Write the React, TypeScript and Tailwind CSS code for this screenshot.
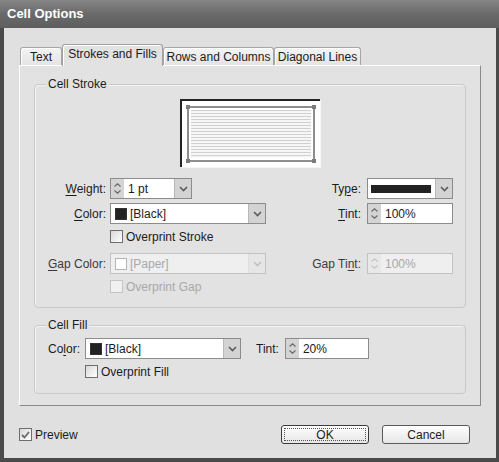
import React from 'react';

type Disabled = { disabled?: boolean };

function Chevron({ disabled }: Disabled) {
  return (
    <svg width="9" height="6" viewBox="0 0 9 6">
      <polyline points="1,1 4.5,4.5 8,1" fill="none" stroke={disabled ? '#c0c0c0' : '#5c5c5c'} strokeWidth="1.6" />
    </svg>
  );
}

function DropButton({ disabled }: Disabled) {
  return (
    <div
      className={`flex h-full w-[17px] shrink-0 items-center justify-center border-l ${
        disabled ? 'border-[#dedede] bg-[#e6e6e6]' : 'border-[#b8b8b8] bg-[#d3d3d3]'
      }`}
    >
      <Chevron disabled={disabled} />
    </div>
  );
}

// little up/down nudge arrows on the left of numeric fields
function Spinner({ disabled }: Disabled) {
  const c = disabled ? '#c4c4c4' : '#6a6a6a';
  return (
    <div
      className={`flex h-full w-[13px] shrink-0 flex-col items-center justify-center gap-[3px] ${
        disabled ? 'bg-[#e8e8e8]' : 'bg-[#d4d4d4]'
      }`}
    >
      <svg width="7" height="4" viewBox="0 0 7 4">
        <polyline points="0.5,3.5 3.5,0.8 6.5,3.5" fill="none" stroke={c} strokeWidth="1.2" />
      </svg>
      <svg width="7" height="4" viewBox="0 0 7 4">
        <polyline points="0.5,0.5 3.5,3.2 6.5,0.5" fill="none" stroke={c} strokeWidth="1.2" />
      </svg>
    </div>
  );
}

function Field({ width, disabled, children }: { width: string; disabled?: boolean; children: React.ReactNode }) {
  return (
    <div
      className={`flex h-[21px] shrink-0 items-stretch border ${width} ${
        disabled ? 'border-[#c2c2c2] bg-[#efefef] text-[#a8a8a8]' : 'border-[#8c8c8c] bg-white text-[#1c1c1c]'
      }`}
    >
      {children}
    </div>
  );
}

function SwatchSelect({ width, label, swatch, disabled }: { width: string; label: string; swatch: string; disabled?: boolean }) {
  return (
    <Field width={width} disabled={disabled}>
      <div className="flex flex-1 items-center gap-[3px] pl-[4px]">
        <span className={`h-[12px] w-[12px] border ${disabled ? 'border-[#b4b4b4]' : 'border-[#333]'} ${swatch}`} />
        <span>{label}</span>
      </div>
      <DropButton disabled={disabled} />
    </Field>
  );
}

function NumberField({ width, value, disabled }: { width: string; value: string; disabled?: boolean }) {
  return (
    <Field width={width} disabled={disabled}>
      <Spinner disabled={disabled} />
      <div className="flex flex-1 items-center pl-[4px]">{value}</div>
    </Field>
  );
}

function Check({ label, checked, disabled }: { label: string; checked?: boolean; disabled?: boolean }) {
  return (
    <div className={`flex h-[17px] items-center gap-[3px] ${disabled ? 'text-[#a8a8a8]' : 'text-[#1c1c1c]'}`}>
      <span
        className={`flex h-[13px] w-[13px] items-center justify-center border ${
          disabled ? 'border-[#c4c4c4] bg-[#f0f0f0]' : 'border-[#6e6e6e] bg-gradient-to-br from-[#d8d8d8] to-white'
        }`}
      >
        {checked && (
          <svg width="9" height="8" viewBox="0 0 9 8">
            <polyline points="1,4 3.5,6.5 8,1" fill="none" stroke="#6a6a6a" strokeWidth="1.8" />
          </svg>
        )}
      </span>
      <span>{label}</span>
    </div>
  );
}

const Key = ({ children }: { children: React.ReactNode }) => (
  <span className="underline decoration-1 underline-offset-[2px]">{children}</span>
);

function Group({ title, children, className }: { title: string; children: React.ReactNode; className?: string }) {
  return (
    <div className={`flex flex-col rounded-[4px] border border-[#c9c9c9] shadow-[inset_1px_1px_0_#f4f4f4] ${className ?? ''}`}>
      <span className="-mt-[8px] ml-[11px] w-fit bg-[#e2e2e2] px-[2px] leading-[14px] text-[#1c1c1c]">{title}</span>
      {children}
    </div>
  );
}

function Tab({ label, active, width }: { label: string; active?: boolean; width: string }) {
  return (
    <div
      className={`flex items-center justify-center rounded-t-[3px] border border-b-0 ${width} ${
        active
          ? 'z-10 -mb-[1px] h-[22px] border-[#a0a0a0] bg-[#e2e2e2] pb-[3px] shadow-[inset_1px_1px_0_#fff]'
          : 'h-[18px] border-[#a6a6a6] bg-gradient-to-b from-[#f4f4f4] to-[#e4e4e4] shadow-[inset_1px_1px_0_#fff]'
      }`}
    >
      {label}
    </div>
  );
}

// stroke preview: cell outline with handles and striped fill
function StrokePreview() {
  return (
    <div className="mx-auto mt-[8px] h-[68px] w-[140px] border-l-2 border-t-2 border-l-[#222] border-t-[#222] bg-white p-[5px] shadow-[1px_1px_0_#f6f6f6]">
      <div className="relative h-full w-full border-2 border-[#8e8e8e] p-[2px]">
        <div className="h-full w-full bg-[repeating-linear-gradient(to_bottom,#d0d0d0_0px,#d0d0d0_1px,#f6f6f6_1px,#f6f6f6_3px)]" />
        <span className="absolute -left-[3px] -top-[3px] h-[4px] w-[4px] bg-[#7c7c7c]" />
        <span className="absolute -right-[3px] -top-[3px] h-[4px] w-[4px] bg-[#7c7c7c]" />
        <span className="absolute -bottom-[3px] -left-[3px] h-[4px] w-[4px] bg-[#7c7c7c]" />
        <span className="absolute -bottom-[3px] -right-[3px] h-[4px] w-[4px] bg-[#7c7c7c]" />
      </div>
    </div>
  );
}

function Row({ label, control, rightLabel, rightControl, dim }: {
  label: React.ReactNode;
  control: React.ReactNode;
  rightLabel: React.ReactNode;
  rightControl: React.ReactNode;
  dim?: boolean;
}) {
  return (
    <div className={`flex h-[21px] items-center ${dim ? 'text-[#3a3a3a]' : ''}`}>
      <div className="w-[71px] shrink-0 text-right">{label}</div>
      <div className="ml-[4px] flex flex-1">{control}</div>
      <div className="shrink-0 text-right">{rightLabel}</div>
      <div className="ml-[6px] mr-[12px]">{rightControl}</div>
    </div>
  );
}

export default function App() {
  return (
    <div className="flex h-[462px] w-[499px] flex-col bg-[#4a4a4a] font-['Liberation_Sans',Arial,sans-serif] text-[12px] text-[#1c1c1c]">
      <div className="flex h-[28px] shrink-0 items-center bg-gradient-to-b from-[#858585] via-[#6a6a6a] to-[#5e5e5e] pl-[7px] text-[13px] font-bold text-white">
        Cell Options
      </div>

      <div className="ml-[4px] mr-[3px] mb-[4px] flex flex-1 flex-col bg-[#e0e0e0] px-[15px] pt-[16px]">
        <div className="flex items-end pl-[1px]">
          <Tab label="Text" width="w-[42px]" />
          <Tab label="Strokes and Fills" width="w-[101px]" active />
          <Tab label="Rows and Columns" width="w-[111px]" />
          <Tab label="Diagonal Lines" width="w-[87px]" />
        </div>

        <div className="flex h-[341px] flex-col border border-l-white border-t-white border-b-[#8a8a8a] border-r-[#8a8a8a] bg-[#e2e2e2] px-[14px] pt-[18px]">
          <Group title="Cell Stroke" className="h-[224px]">
            <StrokePreview />
            <div className="mt-[11px] flex flex-col">
              <Row
                label={<><Key>W</Key>eight:</>}
                control={
                  <Field width="w-[82px]">
                    <Spinner />
                    <div className="flex flex-1 items-center pl-[4px]">1 pt</div>
                    <DropButton />
                  </Field>
                }
                rightLabel={<>Ty<Key>p</Key>e:</>}
                rightControl={
                  <Field width="w-[86px]">
                    <div className="flex flex-1 items-center pl-[3px]">
                      <span className="h-[8px] w-[60px] bg-[#222]" />
                    </div>
                    <DropButton />
                  </Field>
                }
              />
              <div className="mt-[4px]">
                <Row
                  label={<><Key>C</Key>olor:</>}
                  control={<SwatchSelect width="w-[156px]" label="[Black]" swatch="bg-[#222]" />}
                  rightLabel={<><Key>T</Key>int:</>}
                  rightControl={<NumberField width="w-[86px]" value="100%" />}
                />
              </div>
              <div className="ml-[75px] mt-[4px]">
                <Check label="Overprint Stroke" />
              </div>
              <div className="mt-[8px]">
                <Row
                  dim
                  label={<><Key>G</Key>ap Color:</>}
                  control={<SwatchSelect width="w-[156px]" label="[Paper]" swatch="bg-white" disabled />}
                  rightLabel={<>Gap Ti<Key>n</Key>t:</>}
                  rightControl={<NumberField width="w-[86px]" value="100%" disabled />}
                />
              </div>
              <div className="ml-[75px] mt-[4px]">
                <Check label="Overprint Gap" disabled />
              </div>
            </div>
          </Group>

          <Group title="Cell Fill" className="mt-[17px] h-[69px]">
            <div className="mt-[6px] flex h-[21px] items-center">
              <div className="w-[45px] shrink-0 text-right">
                Co<Key>l</Key>or:
              </div>
              <div className="ml-[5px]">
                <SwatchSelect width="w-[156px]" label="[Black]" swatch="bg-[#222]" />
              </div>
              <div className="ml-[15px]">Tint:</div>
              <div className="ml-[6px]">
                <NumberField width="w-[84px]" value="20%" />
              </div>
            </div>
            <div className="ml-[50px] mt-[4px]">
              <Check label="Overprint Fill" />
            </div>
          </Group>
        </div>

        <div className="mt-[19px] flex items-center">
          <Check label="Preview" checked />
          <div className="ml-auto mr-[11px] flex gap-[13px]">
            <button className="flex h-[19px] w-[88px] items-center justify-center rounded-[3px] border border-[#3c3c3c] bg-gradient-to-b from-white to-[#e6e6e6] p-[2px]">
              <span className="flex h-full w-full items-center justify-center border border-dotted border-[#555] leading-none">OK</span>
            </button>
            <button className="flex h-[19px] w-[88px] items-center justify-center rounded-[3px] border border-[#5a5a5a] bg-gradient-to-b from-white to-[#e6e6e6]">
              Cancel
            </button>
          </div>
        </div>
      </div>
    </div>
  );
}
